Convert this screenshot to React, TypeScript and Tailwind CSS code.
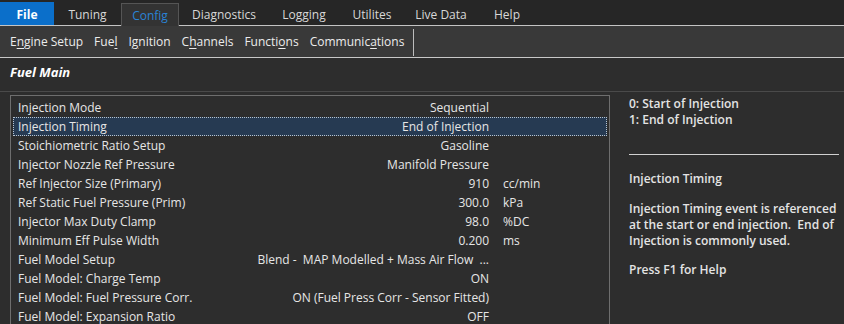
import type React from "react";

const topMenu = [
	{ label: "File", w: "w-[54px]" },
	{ label: "Tuning", w: "w-[67px]" },
	{ label: "Config", w: "w-[58px]" },
	{ label: "Diagnostics", w: "w-[90px]" },
	{ label: "Logging", w: "w-[70px]" },
	{ label: "Utilites", w: "w-[66px]" },
	{ label: "Live Data", w: "w-[72px]" },
	{ label: "Help", w: "w-[60px]" },
];

// mnemonic letter index is underlined
const subMenu: [string, number][] = [
	["Engine Setup", 1],
	["Fuel", 3],
	["Ignition", 1],
	["Channels", 1],
	["Functions", 6],
	["Communications", 8],
];

interface Row {
	label: string;
	value: string;
	unit?: string;
}

const rows: Row[] = [
	{ label: "Injection Mode", value: "Sequential" },
	{ label: "Injection Timing", value: "End of Injection" },
	{ label: "Stoichiometric Ratio Setup", value: "Gasoline" },
	{ label: "Injector Nozzle Ref Pressure", value: "Manifold Pressure" },
	{ label: "Ref Injector Size (Primary)", value: "910", unit: "cc/min" },
	{ label: "Ref Static Fuel Pressure (Prim)", value: "300.0", unit: "kPa" },
	{ label: "Injector Max Duty Clamp", value: "98.0", unit: "%DC" },
	{ label: "Minimum Eff Pulse Width", value: "0.200", unit: "ms" },
	{ label: "Fuel Model Setup", value: "Blend -\u00a0 MAP Modelled + Mass Air Flow\u00a0 ..." },
	{ label: "Fuel Model: Charge Temp", value: "ON" },
	{ label: "Fuel Model: Fuel Pressure Corr.", value: "ON (Fuel Press Corr - Sensor Fitted)" },
	{ label: "Fuel Model: Expansion Ratio", value: "OFF" },
];

function Mnemonic({ text, idx }: { text: string; idx: number }) {
	return (
		<span>
			{text.slice(0, idx)}
			<span className="underline underline-offset-2">{text[idx]}</span>
			{text.slice(idx + 1)}
		</span>
	);
}

function TopBar() {
	return (
		<div className="flex h-[26px] shrink-0 bg-[#262626] pt-[2px]">
			{topMenu.map((m) => {
				if (m.label === "File")
					return (
						<div
							key={m.label}
							className={`${m.w} flex items-center justify-center bg-[#0b6fca] pt-[2px] font-bold text-white border-b border-[#c4c4c4]`}
						>
							File
						</div>
					);
				if (m.label === "Config")
					return (
						<div
							key={m.label}
							className={`${m.w} mt-px flex items-center justify-center border-x border-t border-[#555] bg-[#333] pt-[2px] text-[#2a83d6]`}
						>
							Config
						</div>
					);
				return (
					<div
						key={m.label}
						className={`${m.w} flex items-center justify-center border-b border-[#c4c4c4] pt-[2px] text-[#d8d8d8]`}
					>
						{m.label}
					</div>
				);
			})}
			<div className="flex-1 border-b border-[#c4c4c4]" />
		</div>
	);
}

function SubBar() {
	return (
		<div className="flex h-[32px] shrink-0 items-center border-b border-[#c8c8c8] bg-[#393939] pl-[10px] pt-[1px] text-[#ececec]">
			<div className="flex gap-[11px]">
				{subMenu.map(([t, i]) => (
					<Mnemonic key={t} text={t} idx={i} />
				))}
			</div>
			<div className="ml-[9px] h-[27px] w-px bg-[#bdbdbd]" />
		</div>
	);
}

function ParamList() {
	return (
		<div className="ml-[10px] mt-[3px] w-[600px] border-l border-t border-r border-[#6e6e6e] px-[2px] pt-[2px]">
			{rows.map((r, i) => {
				const selected = i === 1;
				return (
					<div
						key={r.label}
						className={`flex h-[19px] items-center pl-[5px] pt-px ${
							selected
								? "bg-[#263a52] outline-1 outline-dotted outline-[#b8c4d0] -outline-offset-1"
								: ""
						}`}
					>
						<span className="flex-1 whitespace-nowrap">{r.label}</span>
						<span className="whitespace-nowrap text-right">{r.value}</span>
						<span className="w-[118px] pl-[14px] whitespace-nowrap">{r.unit}</span>
					</div>
				);
			})}
		</div>
	);
}

function HelpPanel() {
	return (
		<div className="flex-1 pl-[19px] pr-[3px] pt-[4px] font-semibold leading-[16px] text-[#e4e4e4]">
			<div>0: Start of Injection</div>
			<div>1: End of Injection</div>
			<div className="mt-[26px] h-px w-[210px] bg-[#d0d0d0]" />
			<div className="mt-[16px]">Injection Timing</div>
			<div className="mt-[14px] w-[212px]">
				Injection Timing event is referenced at the start or end injection.&nbsp; End of Injection is commonly used.
			</div>
			<div className="mt-[13px]">Press F1 for Help</div>
		</div>
	);
}

export default function App() {
	const font: React.CSSProperties = {};
	return (
		<div
			className="flex h-[324px] w-[844px] flex-col overflow-hidden bg-[#2d2d2d] text-[12px] text-[#e6e6e6] [font-family:'Open_Sans','Noto_Sans',sans-serif]"
			style={font}
		>
			<TopBar />
			<SubBar />
			<div className="flex h-[33px] shrink-0 items-center pb-[3px] pl-[10px] text-[13px] font-bold italic text-white">
				Fuel Main
			</div>
			<div className="flex min-h-0 flex-1 overflow-hidden border-t border-[#4a4a4a]">
				<ParamList />
				<HelpPanel />
			</div>
		</div>
	);
}
